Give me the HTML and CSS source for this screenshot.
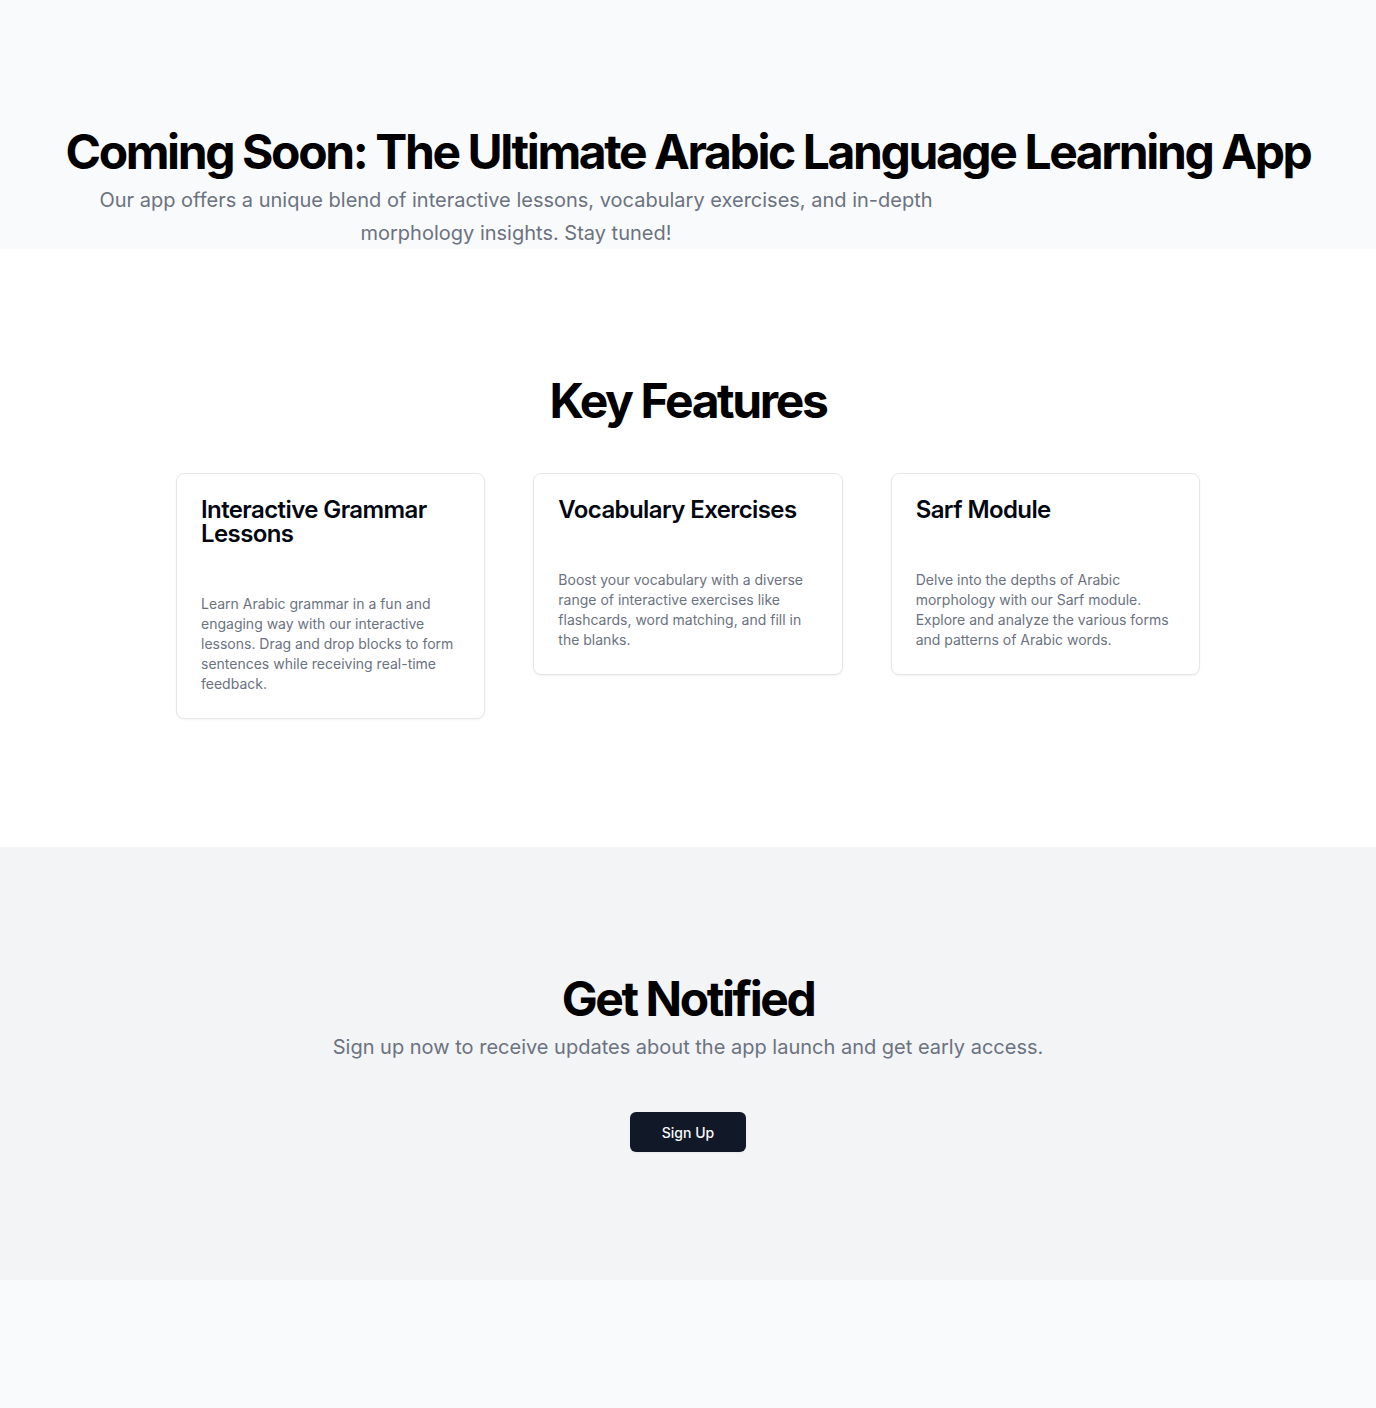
FILE: index.html
```html
<!DOCTYPE html>
<html lang="en">
<head>
<meta charset="utf-8">
<title>Coming Soon</title>
<link rel="stylesheet" href="styles.css">
</head>
<body>
<main class="page">
  <section class="hero">
    <h1 class="hero-title">Coming Soon: The Ultimate Arabic Language Learning App</h1>
    <div class="hero-inner">
      <p class="hero-text">Our app offers a unique blend of interactive lessons, vocabulary exercises, and in-depth morphology insights. Stay tuned!</p>
    </div>
  </section>
  <section class="features">
    <h2 class="section-title">Key Features</h2>
    <div class="card-grid">
      <div class="card">
        <h3 class="card-title">Interactive Grammar Lessons</h3>
        <p class="card-text">Learn Arabic grammar in a fun and engaging way with our interactive lessons. Drag and drop blocks to form sentences while receiving real-time feedback.</p>
      </div>
      <div class="card">
        <h3 class="card-title">Vocabulary Exercises</h3>
        <p class="card-text">Boost your vocabulary with a diverse range of interactive exercises like flashcards, word matching, and fill in the blanks.</p>
      </div>
      <div class="card">
        <h3 class="card-title">Sarf Module</h3>
        <p class="card-text">Delve into the depths of Arabic morphology with our Sarf module. Explore and analyze the various forms and patterns of Arabic words.</p>
      </div>
    </div>
  </section>
  <section class="notify">
    <h2 class="section-title">Get Notified</h2>
    <p class="notify-text">Sign up now to receive updates about the app launch and get early access.</p>
    <button class="btn" type="button">Sign Up</button>
  </section>
</main>
</body>
</html>
```
FILE: styles.css
```css
* { box-sizing: border-box; }
html, body { margin: 0; padding: 0; }
body {
  font-family: Inter, "Noto Sans", "Liberation Sans", sans-serif;
  background: #f9fafb;
  color: #030712;
  min-height: 1408px;
}
.page { display: flex; flex-direction: column; }

.hero {
  background: #f9fafb;
  height: 249px;
  padding: 128px 0 0;
  display: flex;
  flex-direction: column;
}
.hero-title {
  margin: 0;
  font-size: 48px;
  line-height: 48px;
  font-weight: 700;
  letter-spacing: -0.05em;
  white-space: nowrap;
  text-align: center;
  color: #000;
}
.hero-inner { padding-left: 66px; margin-top: 8px; }
.hero-text {
  margin: 0;
  max-width: 900px;
  font-size: 20px;
  line-height: 32.5px;
  color: #6b7280;
  text-align: center;
}

.features {
  background: #fff;
  padding: 128px 0;
  display: flex;
  flex-direction: column;
  align-items: center;
}
.section-title {
  margin: 0;
  font-size: 48px;
  line-height: 48px;
  font-weight: 700;
  letter-spacing: -0.05em;
  text-align: center;
  color: #000;
}
.card-grid {
  margin-top: 48px;
  width: 1024px;
  display: grid;
  grid-template-columns: repeat(3, 1fr);
  gap: 48px;
  align-items: start;
}
.card {
  background: #fff;
  border: 1px solid #e5e7eb;
  border-radius: 8px;
  box-shadow: 0 1px 2px rgba(0,0,0,0.05);
  padding: 24px;
}
.card-title {
  margin: 0;
  font-size: 24px;
  line-height: 24px;
  font-weight: 600;
  letter-spacing: -0.025em;
  color: #030712;
}
.card-text {
  margin: 48px 0 0;
  font-size: 14px;
  line-height: 20px;
  color: #6b7280;
}

.notify {
  background: #f3f4f6;
  padding: 128px 0;
  display: flex;
  flex-direction: column;
  align-items: center;
}
.notify-text {
  margin: 10px 0 0;
  font-size: 20px;
  line-height: 28px;
  color: #6b7280;
  text-align: center;
}
.btn {
  margin-top: 51px;
  height: 40px;
  padding: 0 32px;
  border: 0;
  border-radius: 6px;
  background: #111827;
  color: #f9fafb;
  font-family: inherit;
  font-size: 14px;
  font-weight: 500;
  box-shadow: 0 1px 2px rgba(0,0,0,0.05);
}
```
